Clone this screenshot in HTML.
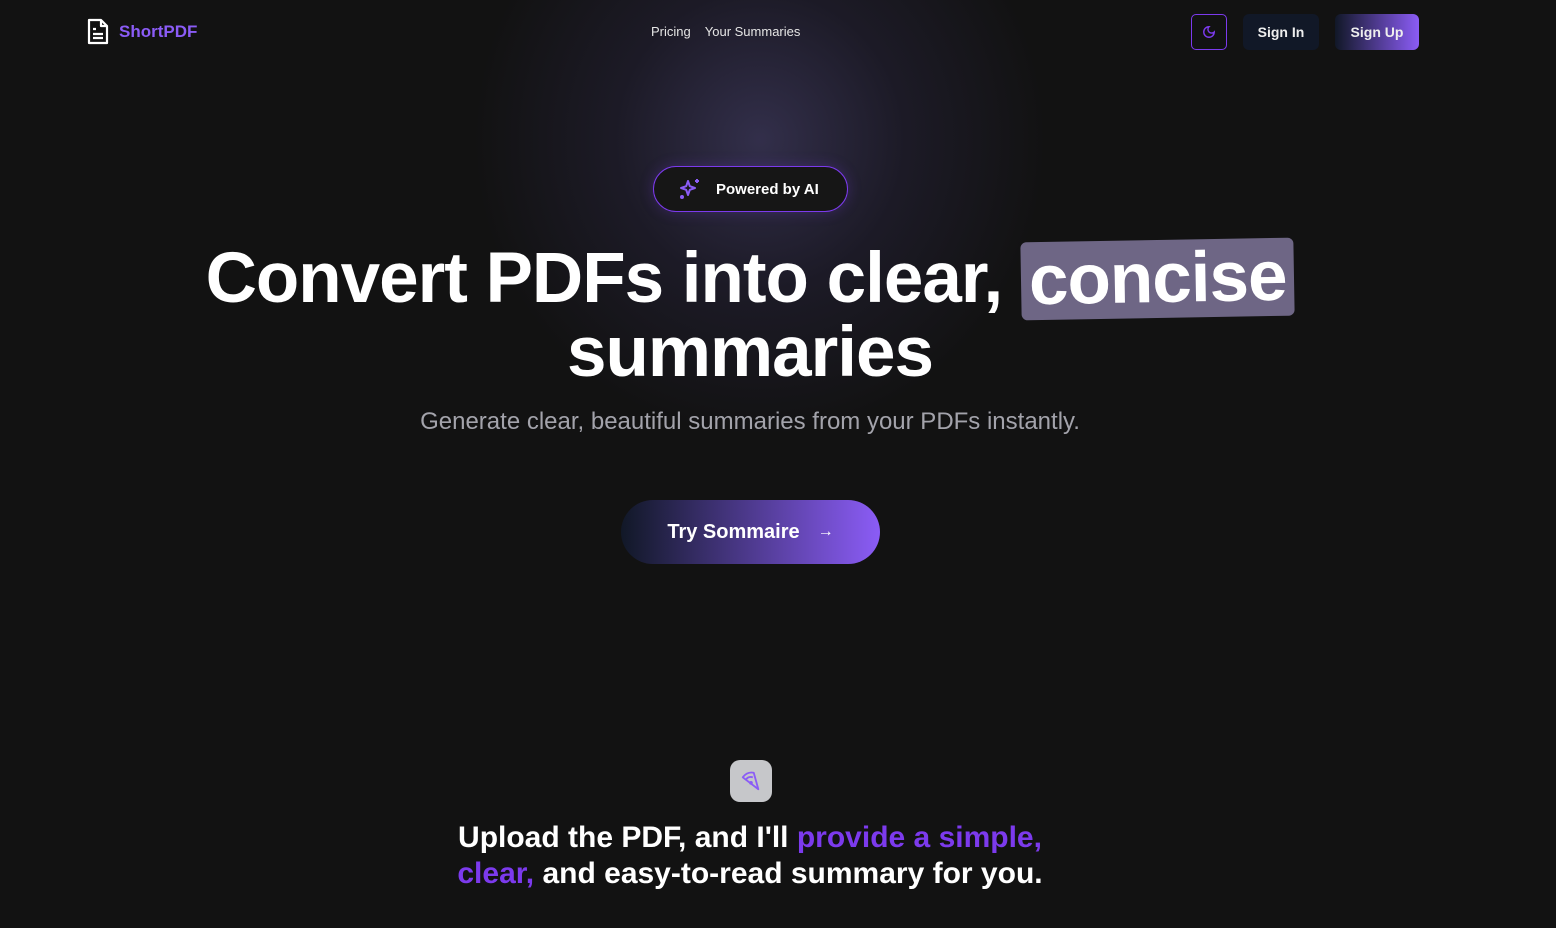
<!DOCTYPE html>
<html><head><meta charset="utf-8"><style>
*{margin:0;padding:0;box-sizing:border-box}
body{width:1556px;height:928px;overflow:hidden;background:#121212;font-family:"Liberation Sans",sans-serif;color:#fff;position:relative}
.glow{position:absolute;left:470px;top:-160px;width:580px;height:600px;background:radial-gradient(ellipse at center,rgba(72,66,112,.6) 0%,rgba(45,40,72,.38) 35%,rgba(18,18,18,0) 70%)}
.abs{position:absolute}
.logo{left:86px;top:18px;display:flex;align-items:center;gap:9px;font-weight:bold;font-size:17px;color:#8b5cf6}
.nav{top:24px;left:651px;font-size:13px;color:#e5e5e5}
.nav span{margin-right:14px}
.moon{left:1191px;top:14px;width:36px;height:36px;border:1.5px solid #7c3aed;border-radius:5px;display:flex;align-items:center;justify-content:center}
.btn{top:14px;height:36px;border-radius:6px;font-weight:bold;font-size:14px;display:flex;align-items:center;justify-content:center;color:#eee}
.pill{left:653px;top:166px;width:195px;height:46px;border:1.5px solid #7c3aed;border-radius:23px;background:#161616;display:flex;align-items:center;font-weight:bold;font-size:15px;box-shadow:0 0 14px rgba(124,58,237,.25)}
h1{position:absolute;left:0;width:1500px;text-align:center;font-size:71px;font-weight:bold;letter-spacing:-1px;line-height:74px}
.hl{background:#6e6685;border-radius:6px;padding:0 8px;transform:rotate(-1deg);display:inline-block;line-height:78px}
.sub{top:408px;left:0;width:1500px;text-align:center;font-size:24px;color:#a3a3ab}
.cta{left:621px;top:500px;width:259px;height:64px;border-radius:32px;background:linear-gradient(90deg,#111827,#8b5cf6);display:flex;align-items:center;justify-content:center;font-weight:bold;font-size:20px;gap:18px}
.ic{left:730px;top:760px;width:42px;height:42px;border-radius:10px;background:#c6c7ca;display:flex;align-items:center;justify-content:center}
.b2{top:820px;left:0;width:1500px;text-align:center;font-size:30px;font-weight:bold;line-height:36px}
.p{color:#7c3aed}
</style></head><body>
<div class="glow"></div>
<div class="abs logo"><svg width="24" height="28" viewBox="0 0 24 28" fill="none" stroke="#fff" stroke-width="2.2" stroke-linejoin="round"><path d="M3 2h12l6 6v17H3z"/><path d="M15 2v6h6"/><path d="M7 11h3M7 16h10M7 20h10"/></svg>ShortPDF</div>
<div class="abs nav"><span>Pricing</span><span>Your Summaries</span></div>
<div class="abs moon"><svg width="14" height="14" viewBox="0 0 24 24" fill="none" stroke="#7c3aed" stroke-width="2.4"><path d="M12 3a6 6 0 0 0 9 9 9 9 0 1 1-9-9z"/></svg></div>
<div class="abs btn" style="left:1243px;width:76px;background:#111827">Sign In</div>
<div class="abs btn" style="left:1335px;width:84px;background:linear-gradient(90deg,#111827,#8b5cf6)">Sign Up</div>
<div class="abs pill"><svg style="margin:0 14px 0 24px" width="24" height="24" viewBox="0 0 24 24" fill="none" stroke="#8b5cf6" stroke-width="2" stroke-linejoin="round"><path d="M10 4l1.8 5.2L17 11l-5.2 1.8L10 18l-1.8-5.2L3 11l5.2-1.8z"/><path d="M19 2v4M17 4h4"/><circle cx="4" cy="20" r="1" fill="#8b5cf6"/></svg>Powered by AI</div>
<h1 style="top:240px;left:0">Convert PDFs into clear, <span class="hl">concise</span></h1>
<h1 style="top:316px;left:0">summaries</h1>
<div class="abs sub">Generate clear, beautiful summaries from your PDFs instantly.</div>
<div class="abs cta">Try Sommaire <span style="font-size:16px;font-weight:normal">→</span></div>
<div class="abs ic"><svg width="22" height="22" viewBox="0 0 24 24" fill="none" stroke="#8b5cf6" stroke-width="2" stroke-linejoin="round"><path d="M3 8l17 13L15 3C10 2 6 4 3 8z"/><path d="M6 11c2-3 5-4 8-3"/><circle cx="12" cy="14" r="1"/></svg></div>
<div class="abs b2">Upload the PDF, and I'll <span class="p">provide a simple,</span><br><span class="p">clear,</span> and easy-to-read summary for you.</div>
</body></html>
